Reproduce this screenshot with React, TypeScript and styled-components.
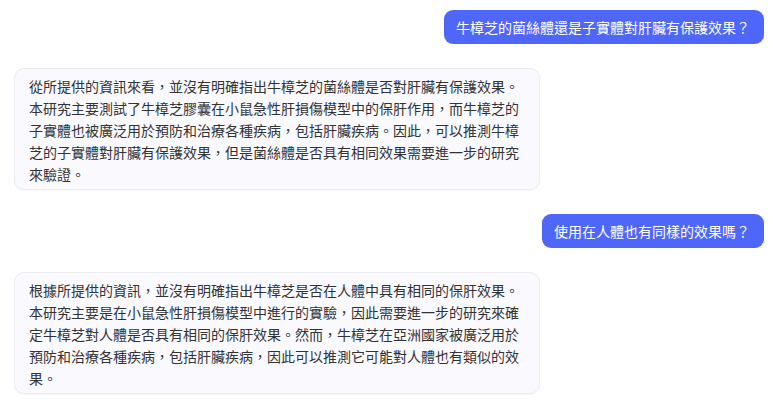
import React from "react";
import styled, { createGlobalStyle } from "styled-components";

const GlobalStyle = createGlobalStyle`
  html, body {
    margin: 0;
    padding: 0;
    background: #ffffff;
  }
  body {
    font-family: "Noto Sans CJK TC", "Noto Sans", sans-serif;
  }
`;

const Chat = styled.div`
  display: flex;
  flex-direction: column;
  gap: 24px;
  padding: 10px 9px 10px 14px;
`;

const Row = styled.div<{ $mine?: boolean }>`
  display: flex;
  justify-content: ${p => (p.$mine ? "flex-end" : "flex-start")};
`;

const UserBubble = styled.div`
  background: #4f67f8;
  color: #ffffff;
  font-size: 14px;
  line-height: 22px;
  padding: 6px 14px 6px 12px;
  border-radius: 9px;
  white-space: nowrap;
`;

const BotBubble = styled.div`
  box-sizing: border-box;
  width: 526px;
  background: #f9f9fe;
  color: #333333;
  font-size: 14px;
  line-height: 22px;
  padding: 6px 14px 4px;
  border: 1px solid #ececf3;
  border-radius: 10px;
  box-shadow: 0 1px 2px rgba(0, 0, 0, 0.04);
`;

const messages = [
  { mine: true, text: "牛樟芝的菌絲體還是子實體對肝臟有保護效果？" },
  {
    mine: false,
    text:
      "從所提供的資訊來看，並沒有明確指出牛樟芝的菌絲體是否對肝臟有保護效果。本研究主要測試了牛樟芝膠囊在小鼠急性肝損傷模型中的保肝作用，而牛樟芝的子實體也被廣泛用於預防和治療各種疾病，包括肝臟疾病。因此，可以推測牛樟芝的子實體對肝臟有保護效果，但是菌絲體是否具有相同效果需要進一步的研究來驗證。",
  },
  { mine: true, text: "使用在人體也有同樣的效果嗎？" },
  {
    mine: false,
    text:
      "根據所提供的資訊，並沒有明確指出牛樟芝是否在人體中具有相同的保肝效果。本研究主要是在小鼠急性肝損傷模型中進行的實驗，因此需要進一步的研究來確定牛樟芝對人體是否具有相同的保肝效果。然而，牛樟芝在亞洲國家被廣泛用於預防和治療各種疾病，包括肝臟疾病，因此可以推測它可能對人體也有類似的效果。",
  },
];

export default function App() {
  return (
    <>
      <GlobalStyle />
      <Chat>
        {messages.map((m, i) => (
          <Row key={i} $mine={m.mine}>
            {m.mine ? <UserBubble>{m.text}</UserBubble> : <BotBubble>{m.text}</BotBubble>}
          </Row>
        ))}
      </Chat>
    </>
  );
}
